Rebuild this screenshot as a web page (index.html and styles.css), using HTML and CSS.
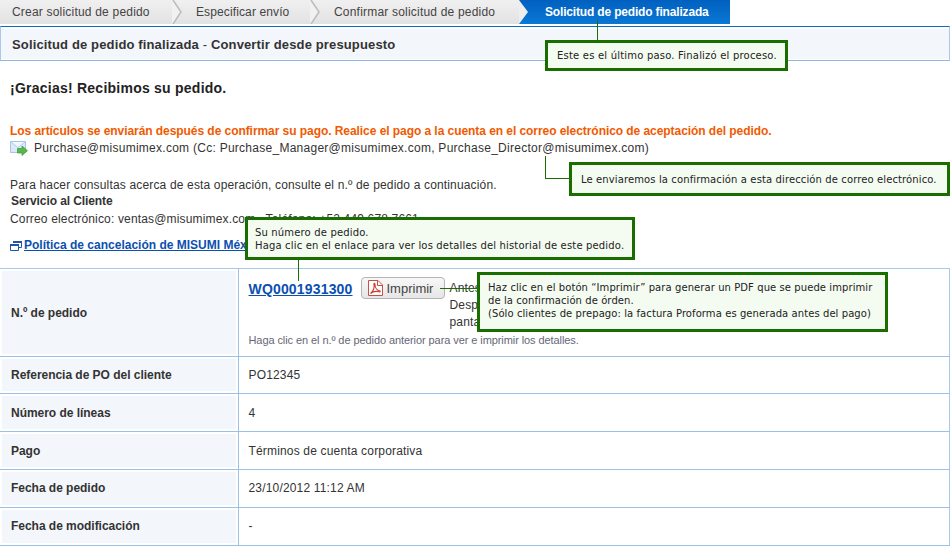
FILE: index.html
```html
<!DOCTYPE html>
<html lang="es">
<head>
<meta charset="utf-8">
<title>Solicitud de pedido finalizada</title>
<link rel="stylesheet" href="styles.css">
</head>
<body>
<div class="page">
  <nav class="steps">
    <span class="step step-1">Crear solicitud de pedido</span>
    <svg class="chev" width="10" height="24" viewBox="0 0 10 24"><path d="M0 0H1L9 12L1 24H0Z" fill="#f1f1f1"/><path d="M1 0L9 12L1 24" fill="none" stroke="#bcbcbc" stroke-width="1.5"/></svg>
    <span class="step step-2">Especificar envío</span>
    <svg class="chev" width="10" height="24" viewBox="0 0 10 24"><path d="M0 0H1L9 12L1 24H0Z" fill="#f1f1f1"/><path d="M1 0L9 12L1 24" fill="none" stroke="#bcbcbc" stroke-width="1.5"/></svg>
    <span class="step step-3">Confirmar solicitud de pedido</span>
    <svg class="chev chev-active" width="10" height="24" viewBox="0 0 10 24"><path d="M0 0L9 12L0 24Z" fill="#eee"/></svg>
    <span class="step step-active">Solicitud de pedido finalizada</span>
  </nav>

  <h1 class="title"><span class="title-inner">Solicitud de pedido finalizada <span class="title-dash">-</span> Convertir desde presupuesto</span></h1>

  <section class="intro">
    <h2 class="thanks">¡Gracias! Recibimos su pedido.</h2>
    <p class="warn">Los artículos se enviarán después de confirmar su pago. Realice el pago a la cuenta en el correo electrónico de aceptación del pedido.</p>
    <p class="mail">
      <svg class="mail-icon" width="18" height="15" viewBox="0 0 18 15"><path d="M.5.5H15.5V11.5H.5Z" fill="#dce9f9" stroke="#a8c4e8"/><path d="M1 1L8 6.5L15 1" fill="#f3f8fe" stroke="#b4cdec"/><path d="M7.5 7.5H12V5L17.5 9.7L12 14.5V12H7.5Z" fill="#55b848" stroke="#3d9a3a" stroke-width=".7"/></svg>
      <span>Purchase@misumimex.com (Cc: Purchase_Manager@misumimex.com, Purchase_Director@misumimex.com)</span>
    </p>
    <p class="contact">Para hacer consultas acerca de esta operación, consulte el n.º de pedido a continuación.</p>
    <p class="contact contact-head">Servicio al Cliente</p>
    <p class="contact contact-mail">Correo electrónico: ventas@misumimex.com &nbsp; Teléfono: +52 449 678 7661</p>
    <p class="policy">
      <svg class="win-icon" width="12" height="11" viewBox="0 0 12 11"><path d="M3.5 1.5H11.5V7.5H9" fill="none" stroke="#1f56a8"/><path d="M3 1H12V3H3Z" fill="#1f56a8"/><path d="M.5 4.5H8.5V10.5H.5Z" fill="#fff" stroke="#1f56a8"/><path d="M0 4H9V6H0Z" fill="#1f56a8"/></svg>
      <a class="policy-link" href="#">Política de cancelación de MISUMI México</a>
    </p>
  </section>

  <table class="order">
    <tr class="row-order">
      <th>N.º de pedido</th>
      <td>
        <div class="order-top">
          <a class="order-no" href="#">WQ0001931300</a>
          <button class="print" type="button">
            <svg width="15" height="16" viewBox="0 0 15 16"><path d="M.5.5H10L14.5 5V15.5H.5Z" fill="#fff" stroke="#c0524a"/><path d="M9.5.5V5.5H14.5" fill="none" stroke="#c0524a"/><path d="M2.5 13.5C5 11.5 6.5 7.5 6 4C6 3 7 3 7 4.5C7 7.5 9 10.5 12 11C12.5 11.5 12 12 11 11.8C8 11 5 11.5 2.5 13.5Z" fill="none" stroke="#d23a2e" stroke-width="1.1"/></svg>
            <span>Imprimir</span>
          </button>
          <div class="order-note">Antes de imprimir, revise su pedido.<br>Después de imprimir, regrese a esta<br>pantalla para continuar.</div>
        </div>
        <p class="order-help">Haga clic en el n.º de pedido anterior para ver e imprimir los detalles.</p>
      </td>
    </tr>
    <tr class="row-short"><th>Referencia de PO del cliente</th><td>PO12345</td></tr>
    <tr><th>Número de líneas</th><td>4</td></tr>
    <tr><th>Pago</th><td>Términos de cuenta corporativa</td></tr>
    <tr class="row-raised"><th>Fecha de pedido</th><td>23/10/2012 11:12 AM</td></tr>
    <tr class="row-raised"><th>Fecha de modificación</th><td>-</td></tr>
  </table>

  <i class="lead lead-1"></i>
  <div class="tip tip-1">Este es el último paso. Finalizó el proceso.</div>
  <i class="lead lead-2"></i>
  <div class="tip tip-2">Le enviaremos la confirmación a esta dirección de correo electrónico.</div>
  <i class="lead lead-3"></i>
  <div class="tip tip-3">Su número de pedido.<br>Haga clic en el enlace para ver los detalles del historial de este pedido.</div>
  <i class="lead lead-4"></i>
  <div class="tip tip-4">Haz clic en el botón “Imprimir” para generar un PDF que se puede imprimir<br>de la confirmación de órden.<br>(Sólo clientes de prepago: la factura Proforma es generada antes del pago)</div>
</div>
</body>
</html>
```

FILE: styles.css
```css
* { box-sizing: border-box; }
html, body { margin: 0; padding: 0; background: #fff; }
body { font-family: "Liberation Sans", Arial, sans-serif; font-size: 12px; color: #333; }
.page { position: relative; width: 950px; height: 547px; overflow: hidden; }

.steps { display: flex; width: 730px; height: 24px; line-height: 24px; background: linear-gradient(#f0f0f0, #e2e2e2); }
.step { display: block; white-space: nowrap; color: #444; }
.chev { display: block; flex: none; }
.step-1 { width: 172px; padding-left: 12px; letter-spacing: .2px; }
.step-2 { width: 128px; padding-left: 14px; letter-spacing: .12px; }
.step-3 { width: 199px; padding-left: 14px; letter-spacing: .2px; }
.chev-active { background: linear-gradient(#0060c0, #0a78d4); }
.step-active { flex: 1; padding-left: 16px; color: #fff; font-weight: bold; letter-spacing: -.17px; background: linear-gradient(#0060c0, #0a78d4); }

.title { margin: 2px 0 0; height: 35px; border-top: 1px solid #0a6cc4; border-bottom: 1px solid #8db6e2; border-left: 1px solid #a9c8ea; border-right: 1px solid #a9c8ea; padding: 2px 0 1px; background: #fff; font-size: 13px; font-weight: bold; color: #333; letter-spacing: .14px; }
.title-inner { display: block; height: 100%; padding-left: 11px; line-height: 31px; background: #f3f7fb; }
.title-dash { font-weight: normal; }

.intro { height: 207px; padding: 0 10px; }
.intro p, .intro h2 { margin: 0; white-space: nowrap; }
.thanks { padding-top: 19px; font-size: 14px; line-height: 16px; font-weight: bold; color: #222; letter-spacing: .24px; }
.warn { margin-top: 28px !important; line-height: 14px; font-weight: bold; color: #f15a00; letter-spacing: -.06px; }
.mail { display: flex; align-items: center; gap: 6px; margin-top: 2px !important; line-height: 16px; letter-spacing: .265px; }
.mail-icon { display: block; flex: none; }
.contact { line-height: 17px; letter-spacing: .16px; }
.mail + .contact { margin-top: 21px !important; }
.contact-head { font-weight: bold; line-height: 15px; padding-left: 1px; letter-spacing: -.1px; }
.contact-mail { line-height: 20px; }
.policy { display: flex; align-items: center; gap: 2px; margin-top: 8px !important; line-height: 16px; }
.win-icon { display: block; flex: none; }
.policy-link { color: #0b50b0; font-weight: bold; text-decoration: underline; }

.order { width: 950px; border-collapse: collapse; table-layout: fixed; }
.order th, .order td { border: 1px solid #9cc0e6; padding: 0; height: 38px; font-size: 12px; vertical-align: middle; }
.order tr:first-child th, .order tr:first-child td { border-top-color: #a9c8ea; }
.order th { width: 238px; padding-left: 11px; text-align: left; font-weight: bold; color: #333; background: #f3f7fb; border-left: 0; box-shadow: inset 0 0 0 2px #fff; letter-spacing: -.03px; }
.order td { padding-left: 10px; border-right-color: #a9c8ea; letter-spacing: .17px; }
.order .row-order th, .order .row-order td { height: 88px; }
.order .row-short th, .order .row-short td { height: 37px; }
.order .row-raised th, .order .row-raised td { padding-bottom: 2px; }
.order .row-order td { vertical-align: top; }
.order-top { display: flex; align-items: flex-start; padding-top: 8px; height: 62px; }
.order-no { width: 112px; margin-top: 4px; font-size: 14px; font-weight: bold; line-height: 16px; color: #0b50b0; text-decoration: underline; }
.print { display: flex; align-items: center; gap: 4px; width: 84px; height: 22px; margin: 0 5px 0 0; padding: 0 0 0 6px; border: 1px solid #b4b4b4; border-radius: 4px; background: linear-gradient(#f8f8f8, #e6e6e6); font: 13px "Liberation Sans", Arial, sans-serif; color: #444; }
.print svg { display: block; flex: none; }
.order-note { line-height: 17px; padding-top: 3px; white-space: nowrap; }
.order-help { margin: 2px 0 0; font-size: 11px; line-height: 14px; color: #667; white-space: nowrap; letter-spacing: -.08px; }

.tip { position: absolute; border: 3px solid #1a6e00; background: #f4fbf1; color: #222; font-family: "DejaVu Sans", sans-serif; font-size: 10px; line-height: 13px; white-space: nowrap; }
.tip-1 { left: 545px; top: 40px; width: 243px; height: 31px; padding: 6px 0 0 9px; letter-spacing: .2px; }
.tip-2 { left: 569px; top: 162px; width: 381px; height: 34px; padding: 8px 0 0 9px; letter-spacing: .115px; }
.tip-3 { left: 245px; top: 217px; width: 390px; height: 43px; padding: 6px 0 0 7px; letter-spacing: .16px; }
.tip-4 { left: 477px; top: 272px; width: 411px; height: 60px; padding: 6px 0 0 8px; letter-spacing: .08px; }

.lead { position: absolute; display: block; }
.lead-1 { left: 597px; top: 20px; width: 1px; height: 20px; background: #1a6e00; }
.lead-2 { left: 545px; top: 156px; width: 24px; height: 23px; border-left: 1px solid #1a6e00; border-bottom: 1px solid #1a6e00; }
.lead-3 { left: 298px; top: 260px; width: 1px; height: 21px; background: #1a6e00; }
.lead-4 { left: 440px; top: 288px; width: 37px; height: 1px; background: #1a6e00; }
```
